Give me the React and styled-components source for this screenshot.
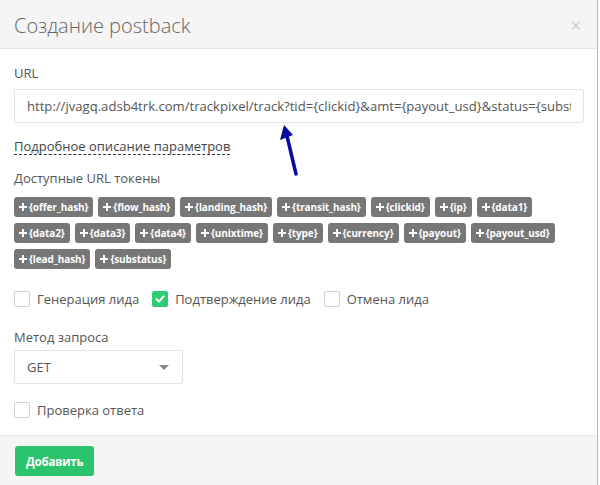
import React from "react";
import styled, { createGlobalStyle } from "styled-components";

const Global = createGlobalStyle`
  html, body { margin: 0; padding: 0; background: #fff; }
  body { font-family: "Open Sans", "Liberation Sans", sans-serif; color: #555; }
  * { box-sizing: border-box; }
`;

const Modal = styled.div`
  position: relative;
  width: 598px;
  height: 485px;
  display: flex;
  flex-direction: column;
  border-right: 1px solid #b5b5b5;
  background: #fff;
`;

const Header = styled.div`
  height: 49px;
  flex-shrink: 0;
  display: flex;
  align-items: center;
  justify-content: space-between;
  padding: 2px 14px 0 14px;
  background: #f5f5f5;
  border-bottom: 1px solid #e3e3e3;

  & h3 {
    margin: 0;
    font-size: 20px;
    font-weight: 300;
    color: #666;
  }
`;

const Close = styled.span`
  font-size: 18px;
  color: #ccc;
  margin-right: 2px;
  line-height: 1;
`;

const Body = styled.div`
  flex: 1;
  padding: 15px 14px 0 14px;
`;

const Label = styled.div`
  font-size: 13px;
  color: #555;
  margin-top: ${(p) => p.mt || 0}px;
  margin-bottom: ${(p) => p.mb || 7}px;
`;

const Input = styled.input`
  display: block;
  height: 34px;
  width: 570px;
  border: 1px solid #e3e3e3;
  border-radius: 2px;
  padding: 0 12px;
  font-family: "Open Sans", "Liberation Sans", sans-serif;
  font-size: 13.1px;
  color: #555;
  outline: none;
  background: #fff;
`;

const HelpLink = styled.span`
  display: inline-block;
  margin-top: 15px;
  font-size: 13px;
  color: #444;
  border-bottom: 1px dashed #333;
  line-height: 16px;
`;

const Tokens = styled.div`
  display: flex;
  flex-wrap: wrap;
  gap: 6px 5px;
  width: 560px;
`;

const Token = styled.span`
  display: inline-flex;
  align-items: center;
  gap: 2px;
  height: 20px;
  padding: 0 5px;
  background: #777;
  color: #fff;
  border-radius: 3px;
  font-size: 10px;
  font-weight: 700;
  letter-spacing: -0.1px;
`;

const CheckRow = styled.div`
  display: flex;
  align-items: center;
  margin-top: ${(p) => p.mt || 0}px;
`;

const CheckItem = styled.label`
  display: flex;
  align-items: center;
  font-size: 13px;
  color: #555;
  margin-right: 13px;
`;

const Box = styled.span`
  width: 16px;
  height: 16px;
  border-radius: 2px;
  margin-right: 7px;
  display: inline-flex;
  align-items: center;
  justify-content: center;
  border: 1px solid ${(p) => (p.checked ? "#2ecc71" : "#d0d0d0")};
  background: ${(p) => (p.checked ? "#2ecc71" : "#fff")};
`;

const Select = styled.div`
  width: 169px;
  height: 34px;
  border: 1px solid #e3e3e3;
  border-radius: 2px;
  display: flex;
  align-items: center;
  justify-content: space-between;
  padding: 0 13px 0 12px;
  font-size: 13px;
  color: #555;
`;

const Caret = styled.span`
  width: 0;
  height: 0;
  border-left: 5px solid transparent;
  border-right: 5px solid transparent;
  border-top: 5px solid #888;
`;

const Footer = styled.div`
  height: 50px;
  flex-shrink: 0;
  background: #f5f5f5;
  border-top: 1px solid #e5e5e5;
  display: flex;
  align-items: center;
  padding: 0 15px;
`;

const Button = styled.button`
  height: 30px;
  padding: 0 11px;
  border: none;
  border-radius: 3px;
  background: #2bc46d;
  color: #fff;
  font-family: "Open Sans", "Liberation Sans", sans-serif;
  font-size: 11.5px;
  font-weight: 700;
  letter-spacing: -0.2px;
  margin-top: 1px;
`;

const Arrow = styled.svg`
  position: absolute;
  left: 277px;
  top: 122px;
`;

const Plus = () => (
  <svg width="8" height="8" viewBox="0 0 8 8">
    <path d="M3 0h2v3h3v2H5v3H3V5H0V3h3z" fill="#fff" />
  </svg>
);

const Check = () => (
  <svg width="10" height="10" viewBox="0 0 10 10">
    <path d="M1.5 5.2 L4 7.6 L8.6 2.4" stroke="#fff" strokeWidth="2" fill="none" strokeLinecap="round" strokeLinejoin="round" />
  </svg>
);

const tokens = [
  "offer_hash", "flow_hash", "landing_hash", "transit_hash", "clickid", "ip", "data1",
  "data2", "data3", "data4", "unixtime", "type", "currency", "payout", "payout_usd",
  "lead_hash", "substatus",
];

const checks = [
  { label: "Генерация лида", checked: false },
  { label: "Подтверждение лида", checked: true },
  { label: "Отмена лида", checked: false },
];

const url =
  "http://jvagq.adsb4trk.com/trackpixel/track?tid={clickid}&amt={payout_usd}&status={substatus}";

export default function App() {
  return (
    <>
      <Global />
      <Modal>
        <Header>
          <h3>Создание postback</h3>
          <Close>×</Close>
        </Header>
        <Body>
          <Label>URL</Label>
          <Input readOnly value={url} />
          <HelpLink>Подробное описание параметров</HelpLink>
          <Label mt={13} mb={10}>Доступные URL токены</Label>
          <Tokens>
            {tokens.map((t) => (
              <Token key={t}>
                <Plus />
                {"{" + t + "}"}
              </Token>
            ))}
          </Tokens>
          <CheckRow mt={21}>
            {checks.map((c) => (
              <CheckItem key={c.label}>
                <Box checked={c.checked}>{c.checked && <Check />}</Box>
                {c.label}
              </CheckItem>
            ))}
          </CheckRow>
          <Label mt={20} mb={4}>Метод запроса</Label>
          <Select>
            GET
            <Caret />
          </Select>
          <CheckRow mt={17}>
            <CheckItem>
              <Box />
              Проверка ответа
            </CheckItem>
          </CheckRow>
        </Body>
        <Footer>
          <Button>Добавить</Button>
        </Footer>
        <Arrow width="30" height="56" viewBox="0 0 30 56">
          <path d="M19 52 L10 14" stroke="#0a0a9e" strokeWidth="3.5" strokeLinecap="round" />
          <path d="M7 3 L3 18 L16 13 Z" fill="#0a0a9e" />
        </Arrow>
      </Modal>
    </>
  );
}
